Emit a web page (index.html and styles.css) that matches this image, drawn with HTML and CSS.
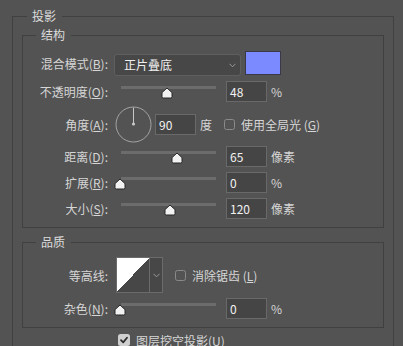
FILE: index.html
```html
<!DOCTYPE html>
<html lang="zh-CN">
<head>
<meta charset="utf-8">
<link rel="stylesheet" href="styles.css">
</head>
<body>
<fieldset class="group outer">
  <legend class="title outer-title">投影</legend>

  <fieldset class="group inner struct">
    <legend class="title">结构</legend>

    <div class="row r-blend">
      <span class="label">混合模式(<u>B</u>):</span>
      <div class="select">
        <span class="select-text">正片叠底</span>
        <svg class="chev" width="7" height="5" viewBox="0 0 7 5"><path d="M0.5 0.8 L3.5 3.8 L6.5 0.8" fill="none" stroke="#9a9a9a" stroke-width="1"/></svg>
      </div>
      <span class="swatch"></span>
    </div>

    <div class="row r-slider">
      <span class="label">不透明度(<u>O</u>):</span>
      <div class="slider">
        <span class="track"></span>
        <svg class="thumb" style="left:46px" width="12" height="12" viewBox="0 0 12 12"><path d="M6 1 L11 5.6 V9.6 Q11 11 9.6 11 H2.4 Q1 11 1 9.6 V5.6 Z" fill="#f2f2f2" stroke="#262626" stroke-width="1" stroke-linejoin="round"/></svg>
      </div>
      <span class="num">48</span>
      <span class="unit">%</span>
    </div>

    <div class="row r-angle">
      <span class="label">角度(<u>A</u>):</span>
      <svg class="dial" width="37" height="37" viewBox="0 0 37 37">
        <circle cx="18.5" cy="18.5" r="17.5" fill="none" stroke="#a4a4a4" stroke-width="1"/>
        <line x1="18.5" y1="1.5" x2="18.5" y2="17.5" stroke="#c8c8c8" stroke-width="1"/>
        <circle cx="18.5" cy="18" r="1.6" fill="#c8c8c8"/>
      </svg>
      <span class="num">90</span>
      <span class="unit u-deg">度</span>
      <span class="check c-global"></span>
      <span class="check-text">使用全局光 (<u>G</u>)</span>
    </div>

    <div class="row r-slider r-tight">
      <span class="label">距离(<u>D</u>):</span>
      <div class="slider">
        <span class="track"></span>
        <svg class="thumb" style="left:56px" width="12" height="12" viewBox="0 0 12 12"><path d="M6 1 L11 5.6 V9.6 Q11 11 9.6 11 H2.4 Q1 11 1 9.6 V5.6 Z" fill="#f2f2f2" stroke="#262626" stroke-width="1" stroke-linejoin="round"/></svg>
      </div>
      <span class="num">65</span>
      <span class="unit">像素</span>
    </div>

    <div class="row r-slider r-flush">
      <span class="label">扩展(<u>R</u>):</span>
      <div class="slider">
        <span class="track"></span>
        <svg class="thumb" style="left:-1px" width="12" height="12" viewBox="0 0 12 12"><path d="M6 1 L11 5.6 V9.6 Q11 11 9.6 11 H2.4 Q1 11 1 9.6 V5.6 Z" fill="#f2f2f2" stroke="#262626" stroke-width="1" stroke-linejoin="round"/></svg>
      </div>
      <span class="num">0</span>
      <span class="unit">%</span>
    </div>

    <div class="row r-slider r-flush">
      <span class="label">大小(<u>S</u>):</span>
      <div class="slider">
        <span class="track"></span>
        <svg class="thumb" style="left:49px" width="12" height="12" viewBox="0 0 12 12"><path d="M6 1 L11 5.6 V9.6 Q11 11 9.6 11 H2.4 Q1 11 1 9.6 V5.6 Z" fill="#f2f2f2" stroke="#262626" stroke-width="1" stroke-linejoin="round"/></svg>
      </div>
      <span class="num">120</span>
      <span class="unit">像素</span>
    </div>
  </fieldset>

  <fieldset class="group inner quality">
    <legend class="title">品质</legend>

    <div class="row r-contour">
      <span class="label">等高线:</span>
      <div class="contour">
        <span class="curve"></span>
        <span class="drop">
          <svg width="7" height="5" viewBox="0 0 7 5"><path d="M0.5 0.8 L3.5 3.8 L6.5 0.8" fill="none" stroke="#9a9a9a" stroke-width="1"/></svg>
        </span>
      </div>
      <span class="check c-alias"></span>
      <span class="check-text">消除锯齿 (<u>L</u>)</span>
    </div>

    <div class="row r-slider r-noise">
      <span class="label">杂色(<u>N</u>):</span>
      <div class="slider">
        <span class="track"></span>
        <svg class="thumb" style="left:-1px" width="12" height="12" viewBox="0 0 12 12"><path d="M6 1 L11 5.6 V9.6 Q11 11 9.6 11 H2.4 Q1 11 1 9.6 V5.6 Z" fill="#f2f2f2" stroke="#262626" stroke-width="1" stroke-linejoin="round"/></svg>
      </div>
      <span class="num">0</span>
      <span class="unit">%</span>
    </div>
  </fieldset>

  <div class="row r-knock">
    <span class="check checked">
      <svg width="12" height="12" viewBox="0 0 12 12"><path d="M3 6.2 L5.2 8.4 L9 3.8" fill="none" stroke="#2c2c2c" stroke-width="1.8" stroke-linecap="round" stroke-linejoin="round"/></svg>
    </span>
    <span class="check-text">图层挖空投影(<u>U</u>)</span>
  </div>
</fieldset>
</body>
</html>
```

FILE: styles.css
```css
html, body {
  margin: 0;
  padding: 0;
  background: #535353;
  overflow: hidden;
}

body {
  width: 403px;
  height: 346px;
  font-family: "Noto Sans CJK SC", "Noto Sans", sans-serif;
  font-size: 12px;
  color: #d6d6d6;
}

u {
  text-decoration: underline;
  text-underline-offset: 1px;
}

.group {
  box-sizing: border-box;
  border: 1px solid #404040;
  margin: 0;
  min-width: 0;
}

.outer {
  width: 382px;
  height: 340px;
  margin: 8px 0 0 12px;
  padding: 3px 9px 0 9px;
}

.title {
  line-height: 16px;
  height: 16px;
  padding: 0 6px 0 5px;
  margin-left: 13px;
  color: #dcdcdc;
}

.outer-title {
  margin-left: 5px;
}

.inner {
  width: 362px;
  padding: 8px 0 6px 0;
}

.quality {
  margin-top: 6px;
  padding-top: 7px;
}

.row {
  display: flex;
  align-items: center;
}

.label {
  width: 85px;
  text-align: right;
  flex: none;
  white-space: nowrap;
}

/* blend row */
.r-blend {
  height: 26px;
  align-items: flex-start;
}
.r-blend .label {
  line-height: 26px;
}
.select {
  box-sizing: border-box;
  width: 127px;
  height: 22px;
  margin: 3px 0 0 6px;
  border: 1px solid #5f5f5f;
  border-radius: 3px;
  background: #474747;
  display: flex;
  align-items: center;
  justify-content: space-between;
  padding: 0 4px 0 9px;
  color: #f0f0f0;
}
.select-text {
  line-height: 20px;
}
.chev {
  display: block;
  margin-top: 1px;
}
.swatch {
  box-sizing: border-box;
  width: 36px;
  height: 24px;
  margin-left: 4px;
  background: #7b8bff;
  border: 1px solid #383848;
}

/* slider rows */
.r-slider {
  height: 26px;
  margin-top: 1px;
}
.r-tight {
  margin-top: 1px;
}
.r-flush {
  margin-top: 0;
}
.r-noise {
  margin-top: 2px;
}
.slider {
  position: relative;
  width: 95px;
  height: 26px;
  margin-left: 13px;
  flex: none;
}
.track {
  position: absolute;
  left: 0;
  right: 0;
  top: 8px;
  height: 3px;
  background: #6c6c6c;
}
.thumb {
  position: absolute;
  top: 9px;
  margin-left: -6px;
  display: block;
}

.num {
  box-sizing: border-box;
  width: 41px;
  height: 21px;
  margin-left: 10px;
  border: 1px solid #696969;
  background: #454545;
  color: #f2f2f2;
  padding-left: 3px;
  line-height: 19px;
  flex: none;
}
.unit {
  margin-left: 4px;
}

/* angle row */
.r-angle {
  height: 36px;
  margin-top: 2px;
}
.dial {
  display: block;
  margin-left: 7px;
  flex: none;
}
.r-angle .num {
  margin-left: 3px;
}
.u-deg {
  margin-left: 4px;
}

.check {
  box-sizing: border-box;
  width: 11px;
  height: 11px;
  border: 1px solid #8a8a8a;
  border-radius: 2.5px;
  flex: none;
}
.c-global {
  margin-left: 12px;
}
.check-text {
  margin-left: 6px;
  white-space: nowrap;
}

/* contour row */
.r-contour {
  height: 36px;
}
.contour {
  display: flex;
  box-sizing: border-box;
  height: 36px;
  margin-left: 8px;
  border: 1px solid #6b6b6b;
  flex: none;
}
.curve {
  width: 32px;
  background: linear-gradient(to bottom right, #ffffff 50%, #474747 50%);
}
.drop {
  width: 12px;
  border-left: 1px solid #6b6b6b;
  background: #474747;
  display: flex;
  align-items: center;
  justify-content: center;
}
.drop svg {
  display: block;
}
.c-alias {
  margin-left: 12px;
}

/* knockout row */
.r-knock {
  height: 16px;
  margin-top: 4px;
}
.checked {
  width: 12px;
  height: 12px;
  margin-left: 96px;
  border: none;
  background: #cfcfcf;
  border-radius: 2.5px;
}
.checked svg {
  display: block;
}
```
